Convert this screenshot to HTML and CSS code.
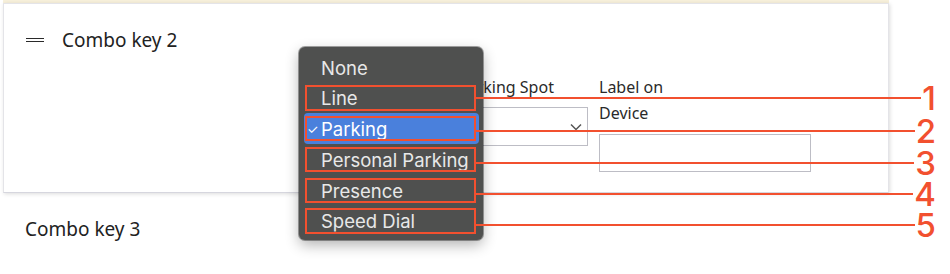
FILE: index.html
```html
<!DOCTYPE html>
<html lang="en-US">
<head>
	<meta charset="UTF-8">
	<meta name="viewport" content="width=device-width, initial-scale=1.0">
	<title>Combo keys</title>
	<link rel="stylesheet" href="styles.css">
</head>
<body>

	<div class="top-strip"></div>

	<div class="key-card">
		<div class="key-head">
			<span class="drag-handle"></span>
			<span class="key-title">Combo key 2</span>
		</div>
		<div class="key-fields">
			<div class="field spot-field">
				<label class="field-label">Parking Spot</label>
				<div class="select-box">
					<svg class="chevron" width="12" height="8" viewBox="0 0 12 8"><path d="M1 1.5 L6 6.5 L11 1.5" fill="none" stroke="#555" stroke-width="1.5"/></svg>
				</div>
			</div>
			<div class="field device-field">
				<label class="field-label">Label on<br>Device</label>
				<div class="text-box"></div>
			</div>
		</div>
	</div>

	<div class="key-row">Combo key 3</div>

	<!-- open type menu -->
	<div class="type-menu">
		<div class="menu-item">None</div>
		<div class="menu-item marked">Line</div>
		<div class="menu-item marked selected">Parking</div>
		<div class="menu-item marked">Personal Parking</div>
		<div class="menu-item marked">Presence</div>
		<div class="menu-item marked">Speed Dial</div>
	</div>

	<!-- annotation call outs -->
	<div class="callout first"><span class="lead"></span><span class="num">1</span></div>
	<div class="callout second"><span class="lead"></span><span class="num">2</span></div>
	<div class="callout third"><span class="lead"></span><span class="num">3</span></div>
	<div class="callout fourth"><span class="lead"></span><span class="num">4</span></div>
	<div class="callout fifth"><span class="lead"></span><span class="num">5</span></div>

</body>
</html>
```

FILE: styles.css
```css
/* page */
body {
    margin: 0;
    background: #ffffff;
    color: #222222;
    font-family: "Noto Sans", "Open Sans", sans-serif;
}
.top-strip {
    width: 886px;
    height: 3px;
    margin-left: 3px;
    background: #f7f0db;
}

/* combo key card */
.key-card {
    width: 886px;
    margin-left: 3px;
    box-sizing: border-box;
    padding: 23px 0 20px 22px;
    border: 1px solid #e4e4e8;
    border-bottom-color: #d6d6de;
    box-shadow: 1px 1px 4px rgba(0,0,0,0.14);
}
.key-head {
    display: flex;
    align-items: center;
    gap: 18px;
    height: 26px;
}
.drag-handle {
    width: 18px;
    height: 2.5px;
    border-top: 1.6px solid #2a2a2a;
    border-bottom: 1.6px solid #2a2a2a;
}
.key-title {
    font-size: 19px;
    line-height: 26px;
}
.key-fields {
    display: flex;
    align-items: flex-start;
    gap: 11px;
    margin-top: 21px;
    padding-left: 432px;
}
.field-label {
    display: block;
    font-size: 16px;
    line-height: 26px;
    color: #2a2a2a;
}
.spot-field .field-label {
    margin-bottom: 7px;
}
.device-field .field-label {
    margin-bottom: 8px;
}
.select-box {
    width: 130px;
    height: 39px;
    box-sizing: border-box;
    border: 1px solid #bdbdc5;
    display: flex;
    align-items: center;
    justify-content: flex-end;
    padding-right: 5px;
}
.text-box {
    width: 212px;
    height: 38px;
    box-sizing: border-box;
    border: 1px solid #bdbdc5;
}
.key-row {
    margin-top: 23px;
    padding-left: 25px;
    font-size: 19px;
    line-height: 26px;
}

/* the native looking popup menu */
.type-menu {
    position: absolute;
    left: 299px;
    top: 47px;
    width: 184px;
    height: 193px;
    box-sizing: border-box;
    padding-top: 4.5px;
    background: #4f504f;
    border-radius: 6px;
    box-shadow: 0 0 0 1px rgba(0,0,0,0.35), 0 5px 14px rgba(0,0,0,0.3);
    font-family: Inter, "Liberation Sans", sans-serif;
    font-size: 18.5px;
}
.menu-item {
    position: relative;
    height: 30.75px;
    line-height: 32.5px;
    margin: 0 4px 0 5px;
    padding-left: 17px;
    color: #e8e8e8;
    border-radius: 4px;
}
.menu-item.selected {
    background: #4a80dc;
    color: #ffffff;
}
.menu-item.selected::before {
    content: "\2713";
    position: absolute;
    left: 3px;
    font-size: 13px;
}
/* red boxes drawn over the options */
.menu-item.marked::after {
    content: "";
    position: absolute;
    left: 1px;
    right: 3px;
    top: 3px;
    bottom: 2.5px;
    border: 2px solid #f2502f;
}

/* numbered leader lines */
.callout {
    position: absolute;
    left: 476px;
    width: 460px;
    height: 34px;
    display: flex;
    align-items: center;
}
.callout .lead {
    flex: 1;
    height: 2px;
    background: #f2502f;
}
.callout .num {
    margin-left: 1px;
    font-family: Inter, "Liberation Sans", sans-serif;
    font-weight: 500;
    font-size: 33px;
    line-height: 26px;
    color: #f2502f;
}
.callout.first { top: 80.5px; }
.callout.second { top: 114px; }
.callout.third { top: 145.5px; }
.callout.fourth { top: 176.5px; }
.callout.fifth { top: 208px; }
```
